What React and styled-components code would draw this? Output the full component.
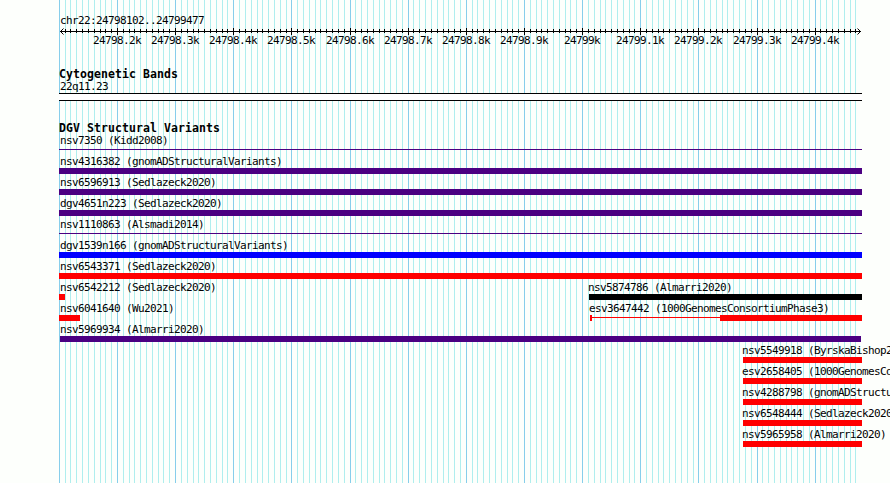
import React from "react";
import styled, { createGlobalStyle } from "styled-components";

const START = 24798102;
const END = 24799477;
const WIDTH = 890;
const HEIGHT = 483;

const toX = (pos) => Math.round(60 + ((pos - START) * 800) / (END - START + 1));

const positions = [];
for (let pos = 24798100; pos <= END; pos += 10) positions.push(pos);

const isMajor = (pos) => pos % 100 === 0;

const INDIGO = "#4b0082";
const RED = "#ff0000";

// STYLING
const GlobalStyle = createGlobalStyle`
  body {
    margin: 0;
    background: #fdfffc;
    overflow: hidden;
  }
`;

const Panel = styled.div`
  position: relative;
  width: ${WIDTH}px;
  height: ${HEIGHT}px;
  overflow: hidden;
  background: #fdfffc;
  color: #000;
  font-family: "DejaVu Sans Mono", monospace;
`;

const Grid = styled.svg`
  position: absolute;
  top: 0;
  left: 0;
`;

const Content = styled.div`
  position: relative;
  padding: 14px 28px 0 59px;
`;

const Label = styled.div`
  height: 13px;
  margin-left: ${(props) => props.$indent ?? 1}px;
  font-size: 11px;
  line-height: 13px;
  letter-spacing: -0.622px;
  white-space: pre;
`;

const Ruler = styled.svg`
  display: block;
  margin-left: -59px;
`;

const ScaleText = styled.text`
  font-size: 11px;
  letter-spacing: -0.622px;
`;

const Title = styled.h2`
  height: 12px;
  margin: 0;
  font-size: 11.5px;
  font-weight: bold;
  line-height: 13px;
  letter-spacing: 0.077px;
  white-space: pre;
`;

const Bands = styled.section`
  margin-top: 20px;
`;

const Band = styled.div`
  box-sizing: border-box;
  width: 803px;
  height: 8px;
  border: solid #000;
  border-width: 1px 0;
  background: #fff;
`;

const Variants = styled.section`
  margin-top: 21px;
`;

const Row = styled.div`
  display: flex;
  height: 21px;
`;

const Feature = styled.div`
  flex: none;
  width: ${(props) => props.$width}px;
  margin-left: ${(props) => props.$gap || 0}px;
`;

const Glyph = styled.div`
  display: flex;
  align-items: flex-start;
  height: 6px;
`;

const Segment = styled.div`
  width: ${(props) => props.$width}px;
  height: ${(props) => (props.$thin ? 1 : 6)}px;
  margin-top: ${(props) => (props.$thin ? 2 : 0)}px;
  background: ${(props) => props.$color};
`;

const rows = [
  [{ name: "nsv7350 (Kidd2008)", width: 803, color: INDIGO, thin: true }],
  [{ name: "nsv4316382 (gnomADStructuralVariants)", width: 803, color: INDIGO }],
  [{ name: "nsv6596913 (Sedlazeck2020)", width: 803, color: INDIGO }],
  [{ name: "dgv4651n223 (Sedlazeck2020)", width: 803, color: INDIGO }],
  [{ name: "nsv1110863 (Alsmadi2014)", width: 803, color: INDIGO, thin: true }],
  [{ name: "dgv1539n166 (gnomADStructuralVariants)", width: 803, color: "#0000ff" }],
  [{ name: "nsv6543371 (Sedlazeck2020)", width: 803, color: RED }],
  [
    { name: "nsv6542212 (Sedlazeck2020)", width: 6, color: RED },
    { name: "nsv5874786 (Almarri2020)", gap: 524, width: 273, color: "#000", indent: -1 },
  ],
  [
    { name: "nsv6041640 (Wu2021)", width: 21, color: RED },
    {
      name: "esv3647442 (1000GenomesConsortiumPhase3)",
      gap: 510,
      width: 272,
      indent: -1,
      segments: [
        { width: 2, color: RED },
        { width: 128, color: RED, thin: true },
        { width: 142, color: RED },
      ],
    },
  ],
  [{ name: "nsv5969934 (Almarri2020)", gap: 1, width: 801, color: INDIGO, indent: 0 }],
  [{ name: "nsv5549918 (ByrskaBishop2022)", gap: 684, width: 119, color: RED, indent: -1 }],
  [{ name: "esv2658405 (1000GenomesConsortiumPhase1)", gap: 684, width: 119, color: RED, indent: -1 }],
  [{ name: "nsv4288798 (gnomADStructuralVariants)", gap: 684, width: 119, color: RED, indent: -1 }],
  [{ name: "nsv6548444 (Sedlazeck2020)", gap: 684, width: 119, color: RED, indent: -1 }],
  [{ name: "nsv5965958 (Almarri2020)", gap: 684, width: 119, color: RED, indent: -1 }],
];

function GridLines() {
  return (
    <Grid width={WIDTH} height={HEIGHT} shapeRendering="crispEdges">
      {positions.map((pos) => (
        <rect
          key={pos}
          x={toX(pos)}
          y="0"
          width="1"
          height={HEIGHT}
          fill={isMajor(pos) ? "#87ceeb" : "#afeeee"}
        />
      ))}
    </Grid>
  );
}

function Scale() {
  return (
    <Ruler width="862" height="21" viewBox="0 27 862 21">
      <g shapeRendering="crispEdges">
        <rect x="60" y="31" width="801" height="1" />
        {positions.slice(1).map((pos) => (
          <rect
            key={pos}
            x={toX(pos)}
            y={isMajor(pos) ? 28 : 29}
            width="1"
            height={isMajor(pos) ? 7 : 4}
          />
        ))}
      </g>
      <path
        d="M63.5 28.5L60.5 31.5L63.5 34.5M857.5 28.5L860.5 31.5L857.5 34.5"
        fill="none"
        stroke="#000"
      />
      {positions
        .filter((pos) => isMajor(pos) && pos > START)
        .map((pos) => {
          const text = `${pos / 1000}k`;
          return (
            <ScaleText key={pos} x={toX(pos) - text.length * 3} y="44">
              {text}
            </ScaleText>
          );
        })}
    </Ruler>
  );
}

function VariantFeature({ feature }) {
  const segments = feature.segments || [feature];
  return (
    <Feature $width={feature.width} $gap={feature.gap}>
      <Label $indent={feature.indent}>{feature.name}</Label>
      <Glyph>
        {segments.map((segment, i) => (
          <Segment key={i} $width={segment.width} $thin={segment.thin} $color={segment.color} />
        ))}
      </Glyph>
    </Feature>
  );
}

function App() {
  return (
    <>
      <GlobalStyle />
      <Panel>
        <GridLines />
        <Content>
          <Label>chr22:24798102..24799477</Label>
          <Scale />
          <Bands>
            <Title>Cytogenetic Bands</Title>
            <Label>22q11.23</Label>
            <Band />
          </Bands>
          <Variants>
            <Title>DGV Structural Variants</Title>
            {rows.map((features) => (
              <Row key={features[0].name}>
                {features.map((feature) => (
                  <VariantFeature key={feature.name} feature={feature} />
                ))}
              </Row>
            ))}
          </Variants>
        </Content>
      </Panel>
    </>
  );
}

export default App;
